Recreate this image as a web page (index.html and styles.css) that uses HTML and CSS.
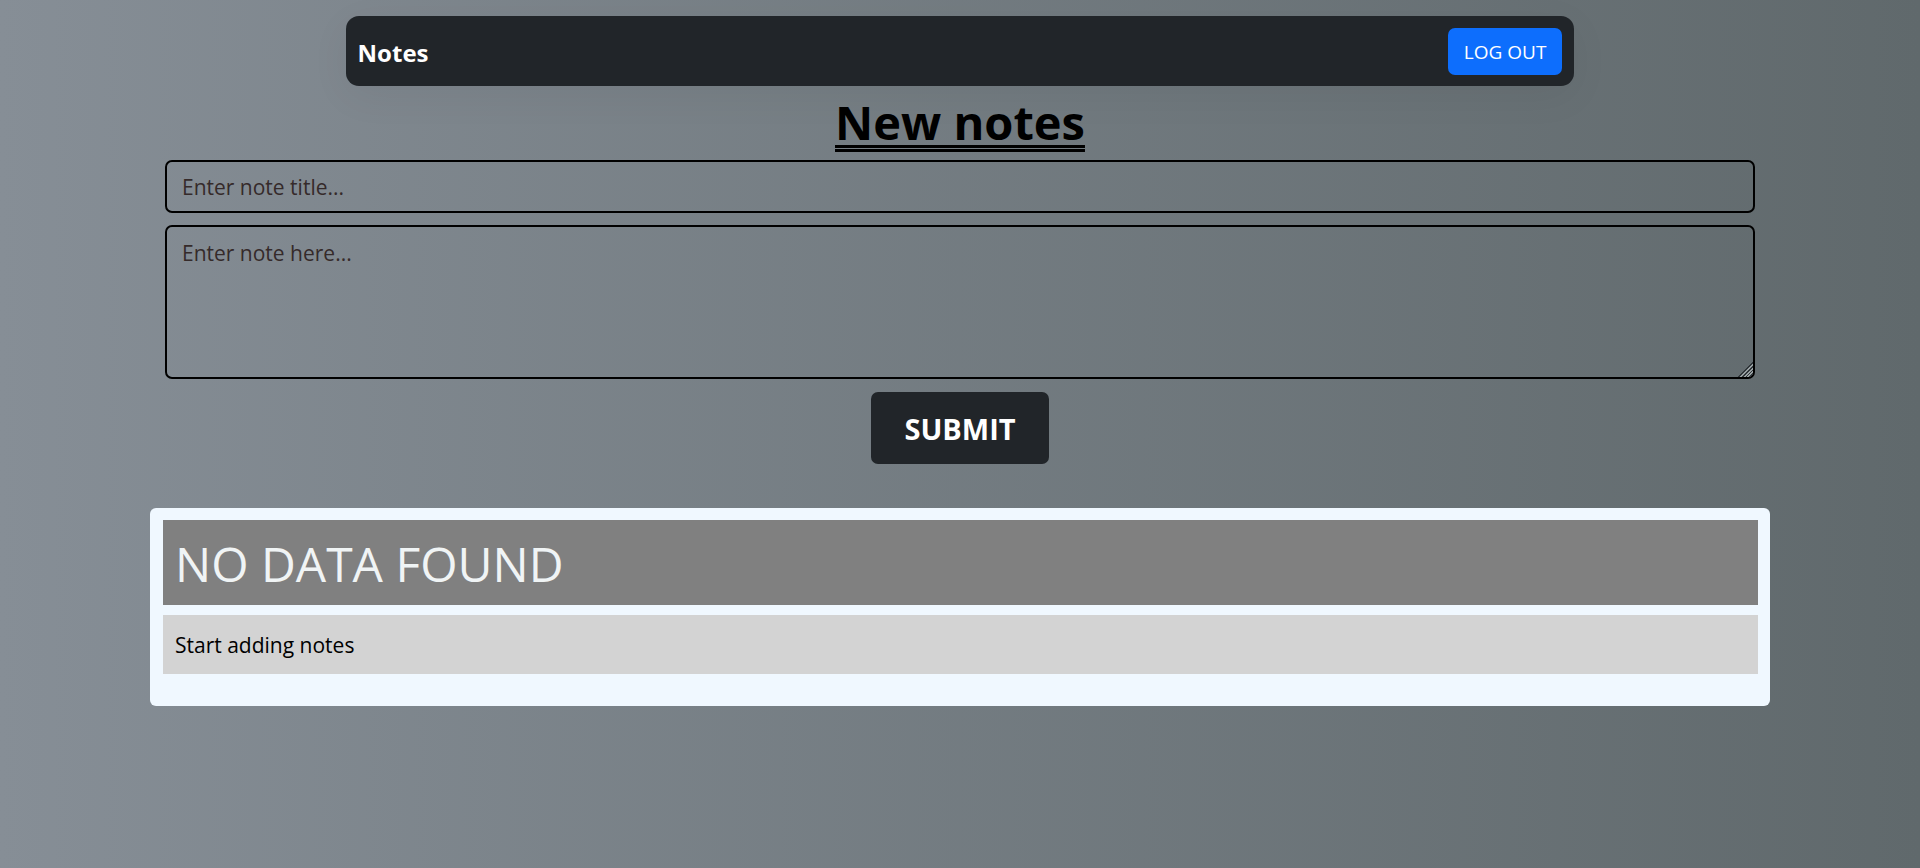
FILE: index.html
```html
<!DOCTYPE html>
<html lang="en">
<head>
<meta charset="utf-8">
<meta name="viewport" content="width=device-width, initial-scale=1">
<title>Notes</title>
<link rel="stylesheet" href="styles.css">
</head>
<body>
<header class="navbar">
  <span class="brand">Notes</span>
  <button class="logout" type="button">LOG OUT</button>
</header>
<main>
  <form class="note-form">
    <h1 class="form-heading">New notes</h1>
    <input class="field" type="text" aria-label="Note title" placeholder="Enter note title...">
    <textarea class="field field-body" aria-label="Note" placeholder="Enter note here..."></textarea>
    <button class="submit" type="submit">SUBMIT</button>
  </form>
  <article class="note-card">
    <h2 class="note-title">NO DATA FOUND</h2>
    <p class="note-text">Start adding notes</p>
  </article>
</main>
</body>
</html>
```
FILE: styles.css
```css
* {
  box-sizing: border-box;
}

body {
  margin: 0;
  min-height: 100vh;
  padding-top: 16px;
  font-family: "Segoe UI", "Open Sans", "Noto Sans", sans-serif;
  font-size: 21px;
  color: #000;
  background: linear-gradient(to right, #868e96, #60696c);
}

.navbar {
  display: flex;
  align-items: center;
  justify-content: space-between;
  width: 64%;
  height: 70px;
  margin: 0 auto;
  padding: 0 12px;
  border-radius: 13px;
  background: #212529;
  box-shadow: 0 10px 40px rgba(0, 0, 0, 0.05);
}

.brand {
  padding-top: 2px;
  font-size: 24px;
  font-weight: 700;
  color: #fff;
}

.logout {
  height: 47px;
  padding: 2px 16px 0;
  border: 0;
  border-radius: 7px;
  font-family: inherit;
  font-size: 19px;
  color: #fff;
  background: #0d6efd;
}

.note-form {
  display: flex;
  flex-direction: column;
  align-items: center;
  gap: 12px;
  width: 1590px;
  max-width: 83%;
  margin: 0 auto;
}

.form-heading {
  margin: 0 0 -4px;
  padding-top: 6px;
  font-size: 47px;
  line-height: 60px;
  font-weight: 700;
  text-decoration: underline double 3px;
  text-decoration-skip-ink: none;
  text-underline-offset: 5px;
}

.field {
  display: block;
  width: 100%;
  height: 53px;
  margin: 0;
  padding: 8px 15px 7px;
  border: 2px solid #000;
  border-radius: 7px;
  font-family: inherit;
  font-size: 21px;
  line-height: 34px;
  background: transparent;
}

.field::placeholder {
  color: #352a2a;
  opacity: 1;
}

.field-body {
  height: 154px;
  padding-top: 9px;
  resize: vertical;
}

.field-body::-webkit-scrollbar {
  width: 18px;
  height: 18px;
}

.field-body::-webkit-resizer {
  background: linear-gradient(135deg,
    transparent 50%,
    #30363a 50% 56%, #98a0a2 56% 62%,
    #30363a 62% 68%, #98a0a2 68% 74%,
    #30363a 74% 80%, #98a0a2 80% 86%,
    #30363a 86% 92%, transparent 92%);
}

.submit {
  height: 72px;
  margin-top: 1px;
  padding: 0 33px;
  border: 0;
  border-radius: 7px;
  font-family: inherit;
  font-size: 29px;
  font-weight: 700;
  color: #fff;
  background: #212529;
}

.note-card {
  width: 1620px;
  max-width: 85%;
  margin: 44px auto 0;
  padding: 12px 12px 32px 13px;
  border-radius: 6px;
  background: #f0f8ff;
}

.note-title {
  margin: 0 0 10px;
  padding: 13px 12px 11px;
  font-size: 48px;
  line-height: 61px;
  font-weight: 400;
  color: #f0f4f5;
  background: #808080;
}

.note-text {
  margin: 0;
  padding: 13px 12px 11px;
  line-height: 35px;
  background: #d3d3d3;
}
```
